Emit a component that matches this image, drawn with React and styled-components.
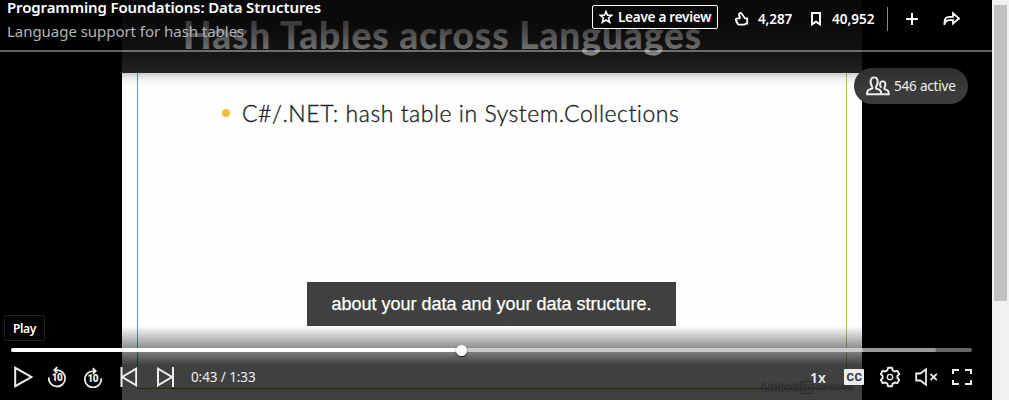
import React from "react";
import styled, { createGlobalStyle } from "styled-components";

const Global = createGlobalStyle`
  * { box-sizing: border-box; }
  html, body { margin: 0; background: #000; overflow: hidden; }
  body { font-family: "Noto Sans", "Open Sans", sans-serif; color: #fff; }
  button { font: inherit; color: inherit; background: none; border: 0; padding: 0; margin: 0; }
`;

const Page = styled.div`
  display: flex;
  width: 1009px;
  height: 400px;
`;
const Player = styled.main`
  position: relative;
  width: 992px;
  height: 400px;
  background: #000;
  overflow: hidden;
`;
const Scrollbar = styled.div`
  width: 17px;
  padding: 5px 2px 0;
  background: #f1f1f1;
`;
const Thumb = styled.div`
  height: 296px;
  background: #c1c1c1;
`;

const Slide = styled.section`
  width: 740px;
  height: 400px;
  margin-left: 122px;
  background: #fffeff;
`;
const SlideTitle = styled.h1`
  height: 73px;
  margin: 0;
  padding: 11px 0 0 61px;
  background: #2c2c2c;
  font: 900 37px/48px Lato, sans-serif;
  letter-spacing: ${(p) => p.$spacing}px;
  white-space: nowrap;
`;
const SlideBody = styled.div`
  width: 710px;
  height: 316px;
  margin-left: 15px;
  padding: 23px 0 0 84px;
  border-style: solid;
  border-width: 0 1px 1px;
  border-color: transparent #b4c45a #8f9a20 #5aa5b8;
`;
const Bullet = styled.div`
  display: flex;
  align-items: center;
  gap: 12px;
  height: 34px;
  color: #202124;
  font: 300 23px/34px Lato, sans-serif;
  -webkit-text-stroke: 0.35px #202124;
  letter-spacing: ${(p) => p.$spacing}px;
  white-space: nowrap;
  &::before {
    content: "";
    width: 8px;
    height: 8px;
    border-radius: 50%;
    background: #efc036;
  }
`;
const Brand = styled.div`
  position: absolute;
  left: 762px;
  top: 380px;
  display: flex;
  align-items: center;
  gap: 1px;
  height: 15px;
  color: #f4f4f4;
  font: 700 11.5px/15px "Liberation Sans", sans-serif;
  text-shadow: 0 0 1px #555, 0 0 2px #777;
`;
const BrandBox = styled.span`
  padding: 0 1px;
  border: 1px solid #b0b0b0;
  border-radius: 2px;
  line-height: 11px;
`;
const BrandSmall = styled.span`
  margin-left: 2px;
  font-size: 6.5px;
  letter-spacing: 0.4px;
`;

const TopShade = styled.div`
  position: absolute;
  inset: 0 0 auto;
  height: 86px;
  background: linear-gradient(rgba(0,0,0,.78) 0, rgba(0,0,0,.76) 25px, rgba(0,0,0,.56) 50px, rgba(0,0,0,.22) 72px, rgba(0,0,0,.06) 79px, transparent 86px);
`;
const BottomShade = styled.div`
  position: absolute;
  inset: 326px 0 0;
  background: linear-gradient(transparent 0, rgba(0,0,0,.44) 22px, rgba(0,0,0,.75) 39px);
`;

const Header = styled.header`
  position: absolute;
  inset: 0 0 auto;
  display: flex;
  height: 52px;
  border-bottom: 2px solid rgba(255,255,255,.38);
  white-space: nowrap;
`;
const Titles = styled.div`
  width: 592px;
  padding-left: 7px;
`;
const CourseTitle = styled.div`
  height: 14px;
  font-size: 15px;
  font-weight: 600;
  line-height: 14px;
  letter-spacing: ${(p) => p.$spacing}px;
`;
const LessonTitle = styled.div`
  margin-top: 7px;
  color: #b4b4b4;
  font-size: 15px;
  line-height: 20px;
  letter-spacing: ${(p) => p.$spacing}px;
`;
const Review = styled.button`
  display: flex;
  align-items: center;
  gap: 5px;
  width: 126px;
  height: 24px;
  margin: 5px 16px 0 0;
  padding-left: 6px;
  border: 1px solid #fff;
  border-radius: 2px;
  background: #0a0a0a;
  font-size: 13.5px;
  font-weight: 600;
  letter-spacing: ${(p) => p.$spacing}px;
`;
const Stat = styled.button`
  display: flex;
  align-items: center;
  gap: ${(p) => p.$gap}px;
  width: ${(p) => p.$width}px;
  height: 38px;
  font-size: 13.5px;
  font-weight: 600;
  letter-spacing: ${(p) => p.$spacing}px;
`;
const Divider = styled.div`
  width: 1px;
  height: 24px;
  margin: 7px 17px 0 0;
  background: #8c8c8c;
`;
const HeaderAction = styled.button`
  display: flex;
  align-items: center;
  width: 38px;
  height: 38px;
`;

const ActivePill = styled.div`
  position: absolute;
  left: 854px;
  top: 68px;
  display: flex;
  align-items: center;
  gap: 4px;
  width: 114px;
  height: 36px;
  padding-left: 12px;
  border-radius: 18px;
  background: linear-gradient(#2e2e2e, #3b3b3b 60%);
  color: #f0f0f0;
  font-size: 13.5px;
  letter-spacing: ${(p) => p.$spacing}px;
  white-space: nowrap;
`;
const Caption = styled.div`
  position: absolute;
  left: 307px;
  top: 282px;
  width: 369px;
  height: 44px;
  background: #404040;
  color: #fff;
  font: 18px/44px "Liberation Sans", sans-serif;
  -webkit-text-stroke: 0.25px #fff;
  letter-spacing: ${(p) => p.$spacing}px;
  text-align: center;
`;
const Tooltip = styled.div`
  position: absolute;
  left: 4px;
  top: 315px;
  width: 41px;
  height: 26px;
  border: 1px solid #202020;
  border-radius: 2px;
  background: #000;
  font-size: 12px;
  font-weight: 600;
  line-height: 26px;
  letter-spacing: -0.3px;
  text-align: center;
`;

const Controls = styled.footer`
  position: absolute;
  inset: 345px 0 0;
`;
const Track = styled.div`
  display: flex;
  align-items: center;
  width: 961px;
  height: 4px;
  margin: 3px 0 0 11px;
  border-radius: 2px;
  background: #666;
`;
const Played = styled.div`
  width: 450.5px;
  height: 4px;
  border-radius: 2px 0 0 2px;
  background: #fff;
`;
const Buffered = styled.div`
  width: 474.5px;
  height: 4px;
  border-radius: 0 2px 2px 0;
  background: linear-gradient(90deg, #cacaca 400px, #999 401px);
`;
const Knob = styled.div`
  flex: none;
  width: 11px;
  height: 11px;
  margin: 0 -5.5px;
  border-radius: 50%;
  background: #fff;
  box-shadow: 0 1px 2px rgba(0,0,0,.7);
  z-index: 1;
`;
const ControlRow = styled.div`
  display: flex;
  align-items: center;
  height: 36px;
  margin-top: 7px;
  padding: 0 12px 0 3px;
  color: #eee;
`;
const Control = styled.button`
  display: flex;
  align-items: center;
  justify-content: center;
  width: 36px;
  height: 36px;
  font-size: 14px;
  font-weight: 600;
`;
const Time = styled.div`
  flex: 1;
  padding-left: 8px;
  font-size: 13.5px;
  letter-spacing: ${(p) => p.$spacing}px;
`;
const CC = styled.span`
  width: 20px;
  height: 16px;
  border-radius: 1px;
  background: #eee;
  color: #333;
  font: 700 11.5px/17px Roboto, sans-serif;
  letter-spacing: 0.5px;
  padding-left: 1px;
`;

const Line = styled.svg`
  display: block;
  flex: none;
  fill: none;
  stroke: currentColor;
  stroke-width: ${(p) => p.$stroke || 2};
`;
const Icon = ({ w, h, stroke, children }) => (
  <Line width={w} height={h} viewBox={`0 0 ${w} ${h}`} $stroke={stroke}>{children}</Line>
);
const SkipDigits = styled.text`
  fill: currentColor;
  stroke: none;
  font: 900 10px Roboto, sans-serif;
  letter-spacing: -0.5px;
  text-anchor: middle;
`;

export default function App() {
  return (
    <Page>
      <Global />
      <Player>
        <Slide>
          <SlideTitle $spacing={0.95}>Hash Tables across Languages</SlideTitle>
          <SlideBody>
            <Bullet $spacing={0.53}>C#/.NET: hash table in System.Collections</Bullet>
          </SlideBody>
        </Slide>
        <Brand>Linked<BrandBox>in</BrandBox><BrandSmall>LEARNING</BrandSmall></Brand>
        <TopShade />
        <BottomShade />

        <Header>
          <Titles>
            <CourseTitle $spacing={-0.12}>Programming Foundations: Data Structures</CourseTitle>
            <LessonTitle $spacing={-0.04}>Language support for hash tables</LessonTitle>
          </Titles>
          <Review $spacing={-0.25}>
            <Icon w={14} h={14} stroke={1.5}>
              <path d="M7 1.4 8.5 5.2 12.8 5.3 9.5 8 10.7 12.4 7 10 3.3 12.4 4.5 8 1.2 5.3 5.5 5.2Z" />
            </Icon>
            Leave a review
          </Review>
          <Stat $width={77} $gap={9} $spacing={-0.1}>
            <Icon w={15} h={16} stroke={1.8}>
              <path d="M6.3 7.6 5 3.9C4.6 2.4 6.6 1.4 7.6 2.6L11 7.4H13.2V12.6H11.7L10.6 13.6H5.2C3.8 13.6 3.3 12.5 3.4 11.8 2.2 11.3 2.2 10.2 2.6 9.7 1.1 8.8 1.8 7.3 3 7.3H6.5" />
            </Icon>
            4,287
          </Stat>
          <Stat $width={76} $gap={11} $spacing={0}>
            <Icon w={10} h={16}><path d="M1 2H9V13.4L5 10.6 1 13.4Z" /></Icon>
            40,952
          </Stat>
          <Divider />
          <HeaderAction aria-label="Add">
            <Icon w={14} h={14}><path d="M7 1V13M1 7H13" /></Icon>
          </HeaderAction>
          <HeaderAction aria-label="Share">
            <Icon w={18} h={16} stroke={1.8}>
              <path d="M1.5 14V11Q1.5 5.8 6.5 5.8H10V2.2L16 7.5 10 12.5V9.2H6.3Q3 9.2 1.5 13" />
            </Icon>
          </HeaderAction>
        </Header>

        <ActivePill $spacing={-0.2}>
          <Icon w={24} h={20} stroke={1.9}>
            <path d="M6.3 10.8C4.7 8.7 4.3 6 4.8 4 5.6 .5 10.7 .5 11.5 4 12 6 11.6 8.7 10 10.8M6.3 10.8V12.3L2.8 13.8Q1 14.6 1 18.2H15.2Q15.2 14.6 13.5 13.8L10 12.3V10.8M15.2 11.8C14 10 13.9 8.5 14.2 7.1 14.9 4.6 18.6 4.6 19.3 7.1 19.7 9.2 19 10.9 18.4 11.7V13L21 14.2Q22.8 15 22.8 18.2H15.2" />
          </Icon>
          546 active
        </ActivePill>

        <Caption $spacing={0}>about your data and your data structure.</Caption>
        <Tooltip>Play</Tooltip>

        <Controls>
          <Track><Played /><Knob /><Buffered /></Track>
          <ControlRow>
            <Control aria-label="Play">
              <Icon w={24} h={24}><path d="M6.2 2.8V21.2L22.4 12Z" /></Icon>
            </Control>
            <Control aria-label="Back 10 seconds">
              <Icon w={20} h={22} stroke={1.8}>
                <path d="M1.8 11.3A8.2 8.2 0 1 0 10 4.1H7.5M10.2 1.2 7.3 4.1 10.2 7" />
                <SkipDigits x="10" y="15.4">10</SkipDigits>
              </Icon>
            </Control>
            <Control aria-label="Forward 10 seconds">
              <Icon w={20} h={22} stroke={1.8}>
                <path d="M18.2 12.3A8.2 8.2 0 1 1 10 5.1H12.5M9.8 2.2 12.7 5.1 9.8 8" />
                <SkipDigits x="9.7" y="16.4">10</SkipDigits>
              </Icon>
            </Control>
            <Control aria-label="Previous">
              <Icon w={18} h={20}><path d="M1.5 0V20M16.2 1.7V18.3L2.2 10Z" /></Icon>
            </Control>
            <Control aria-label="Next">
              <Icon w={18} h={20}><path d="M17 0V20M2 1.7V18.3L16 10Z" /></Icon>
            </Control>
            <Time $spacing={-0.1}>0:43 / 1:33</Time>
            <Control>1x</Control>
            <Control aria-label="Captions"><CC>CC</CC></Control>
            <Control aria-label="Settings">
              <Icon w={22} h={22} stroke={1.9}>
                <path d="M9 1.8H13L13.7 4.4 15.7 5.5 18.3 4.8 20.2 8.1 18.4 10V12L20.2 13.9 18.3 17.2 15.7 16.5 13.7 17.6 13 20.2H9L8.3 17.6 6.3 16.5 3.7 17.2 1.8 13.9 3.6 12V10L1.8 8.1 3.7 4.8 6.3 5.5 8.3 4.4Z" strokeLinejoin="round" />
                <circle cx="11" cy="11" r="2.7" strokeWidth="1.3" />
              </Icon>
            </Control>
            <Control aria-label="Unmute">
              <Icon w={24} h={20} stroke={1.8}>
                <path d="M2.2 6.5H6.3L12 2.2V17.8L6.3 13.5H2.2ZM16.5 6.8 22.8 13.2M22.8 6.8 16.5 13.2" />
              </Icon>
            </Control>
            <Control aria-label="Full screen">
              <Icon w={20} h={16}><path d="M1 5V1H7M13 1H19V5M19 11V15H13M7 15H1V11" /></Icon>
            </Control>
          </ControlRow>
        </Controls>
      </Player>
      <Scrollbar><Thumb /></Scrollbar>
    </Page>
  );
}
